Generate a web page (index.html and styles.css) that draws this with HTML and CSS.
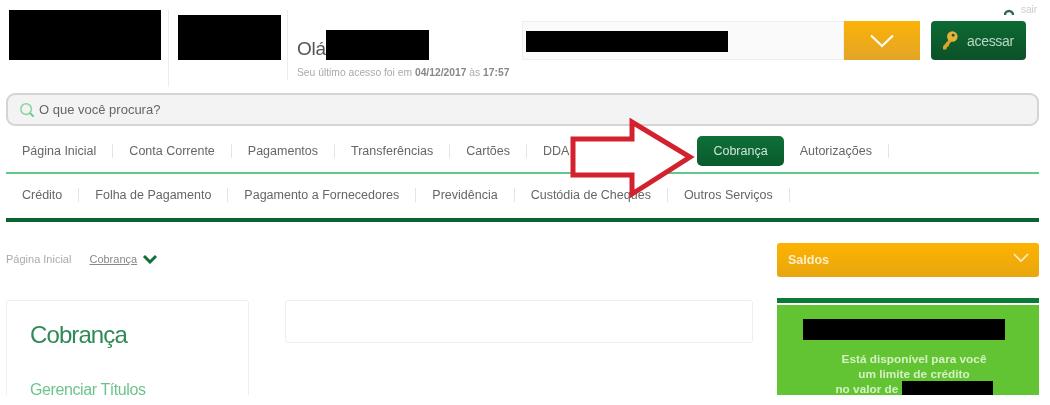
FILE: index.html
```html
<!DOCTYPE html>
<html lang="pt-BR">
<head>
<meta charset="UTF-8" />
<title>Cobrança</title>
<link rel="stylesheet" href="styles.css">
</head>
<body>
<div class="page">

  <header class="top">
    <div class="logos">
      <div class="redact logo-a"></div>
      <div class="sep sep-a"></div>
      <div class="redact logo-b"></div>
      <div class="sep sep-b"></div>
    </div>
    <div class="hello">
      <div class="hello-line"><span class="ola">Olá</span><div class="redact hello-name"></div></div>
      <p class="last">Seu último acesso foi em <b>04/12/2017</b> às <b>17:57</b></p>
    </div>
    <div class="login">
      <div class="exit">
        <svg width="10" height="6" viewBox="0 0 10 6"><path d="M1 6 A4 4 0 0 1 9 6" fill="none" stroke="#2f6b4a" stroke-width="2.4"/></svg>
        <span>sair</span>
      </div>
      <div class="login-row">
        <div class="account"><div class="redact account-name"></div></div>
        <div class="account-arrow">
          <svg width="24" height="14" viewBox="0 0 24 14"><path d="M1 1.5 L12 12 L23 1.5" fill="none" stroke="#fff" stroke-width="2"/></svg>
        </div>
        <a class="btn-access">
          <svg width="19" height="21" viewBox="0 0 22 26"><circle cx="14.5" cy="8" r="6.5" fill="#e8b23a"/><circle cx="15.5" cy="6.5" r="1.8" fill="#0f5f30"/><path d="M10 12 L3 20 L3 24 L7 24 L8 21 L10 20 L11 17 L14 14" fill="#d9a32d"/></svg>
          acessar
        </a>
      </div>
    </div>
  </header>

  <div class="search">
    <svg width="16" height="16" viewBox="0 0 18 18"><circle cx="8" cy="8" r="6" fill="none" stroke="#8fd3a4" stroke-width="1.8"/><path d="M12.5 12.5 L16.5 16.5" stroke="#6cc08a" stroke-width="2"/></svg>
    O que você procura?
  </div>

  <nav class="menu menu-main">
    <a>Página Inicial</a>
    <a>Conta Corrente</a>
    <a>Pagamentos</a>
    <a>Transferências</a>
    <a>Cartões</a>
    <a class="item-dda">DDA</a>
    <a class="active">Cobrança</a>
    <a>Autorizações</a>
  </nav>

  <nav class="menu menu-sub">
    <a>Crédito</a>
    <a>Folha de Pagamento</a>
    <a>Pagamento a Fornecedores</a>
    <a>Previdência</a>
    <a>Custódia de Cheques</a>
    <a>Outros Serviços</a>
  </nav>

  <div class="content">
    <main class="main-col">
      <div class="crumbs">
        <span>Página Inicial</span>
        <u>Cobrança</u>
        <svg width="16" height="10" viewBox="0 0 16 10"><path d="M2 2 L8 8 L14 2" fill="none" stroke="#12703a" stroke-width="3"/></svg>
      </div>
      <div class="cards">
        <section class="card card-menu">
          <h1>Cobrança</h1>
          <a>Gerenciar Títulos</a>
        </section>
        <section class="card card-empty"></section>
      </div>
    </main>

    <aside class="side">
      <div class="saldos">
        Saldos
        <svg width="16" height="10" viewBox="0 0 18 11"><path d="M1 1 L9 9 L17 1" fill="none" stroke="#fdeecb" stroke-width="1.8"/></svg>
      </div>
      <div class="credit">
        <div class="redact credit-name"></div>
        <p>Está disponível para você<br>um limite de crédito<br>no valor de <span class="redact credit-value"></span></p>
      </div>
    </aside>
  </div>

  <svg class="arrow" width="130" height="84" viewBox="0 0 130 84">
    <path d="M3 21 H62 V4 L120 39 L62 76 V57 H3 Z" fill="#fff" stroke="#d3212d" stroke-width="5"/>
  </svg>

</div>
</body>
</html>
```

FILE: styles.css
```css
html, body { margin: 0; padding: 0; background: #fff; }
body { font-family: "Liberation Sans", Arial, sans-serif; color: #666; }
p, h1 { margin: 0; }

.page { position: relative; width: 1050px; height: 395px; overflow: hidden; filter: blur(0.6px); }
.redact { background: #000; }

.top { display: flex; height: 93px; }
.logos { display: flex; align-items: flex-start; margin-left: 9px; }
.logo-a { width: 152px; height: 50px; margin-top: 10px; }
.logo-b { width: 103px; height: 45px; margin-top: 15px; }
.sep { width: 1px; background: #ececec; margin-top: 10px; }
.sep-a { height: 77px; margin: 10px 9px 0 7px; }
.sep-b { height: 70px; margin-left: 6px; }

.hello { margin-left: 9px; width: 224px; padding-top: 30px; }
.hello-line { display: flex; align-items: flex-end; height: 30px; }
.ola { font-size: 19px; color: #555; line-height: 22px; letter-spacing: -0.2px; }
.hello-name { width: 103px; height: 30px; }
.last { font-size: 10.3px; color: #aaa; margin-top: 7px; white-space: nowrap; }
.last b { color: #888; }

.login { width: 517px; margin-left: 1px; }
.exit { display: flex; justify-content: flex-end; align-items: flex-end; gap: 7px; height: 15px; padding-right: 2px; margin-bottom: 6px; font-size: 10px; color: #ccc; }
.login-row { display: flex; height: 39px; }
.account { width: 322px; background: #fafafa; border: 1px solid #eee; box-sizing: border-box; padding: 9px 0 0 3px; }
.account-name { width: 202px; height: 21px; }
.account-arrow { width: 76px; display: flex; align-items: center; justify-content: center; background: linear-gradient(#fbb207, #e3a528); }
.btn-access { display: flex; align-items: center; gap: 8px; width: 95px; margin-left: 11px; padding-left: 9px; box-sizing: border-box; border-radius: 4px; background: linear-gradient(#0d6a33, #0b5128); color: #b9d8c4; font-size: 14px; letter-spacing: -0.3px; }

.search { display: flex; align-items: center; gap: 4px; box-sizing: border-box; width: 1033px; height: 33px; margin-left: 6px; padding-left: 11px; background: #f3f3f3; border: 2px solid #d4d4d4; border-radius: 9px; font-size: 13px; color: #666; }

.menu { display: flex; align-items: center; width: 1033px; margin-left: 6px; box-sizing: border-box; font-size: 12.5px; }
.menu a { padding: 0 16px; border-right: 1px solid #e4e4e4; line-height: 14px; white-space: nowrap; }
.menu-main { height: 48px; padding-top: 3px; border-bottom: 2px solid #62c888; }
.menu-sub { height: 48px; padding-bottom: 2px; border-bottom: 4px solid #0b6430; }
.menu .item-dda { border-right: 0; margin-right: 112px; }
.menu .active { border-right: 0; line-height: 30px; padding: 0 16px; background: linear-gradient(#0e7038, #0a5a2c); color: #cfe6d6; border-radius: 5px; }

.content { display: flex; }
.main-col { width: 777px; }
.crumbs { display: flex; align-items: center; height: 78px; margin-left: 6px; padding-bottom: 4px; box-sizing: border-box; font-size: 11px; color: #aaa; }
.crumbs u { margin: 0 5px 0 18px; color: #888; }
.cards { display: flex; align-items: flex-start; gap: 36px; margin-left: 6px; }
.card { box-sizing: border-box; background: #fff; border: 1px solid #eee; border-radius: 3px; }
.card-menu { width: 243px; height: 100px; padding: 17px 0 0 23px; overflow: hidden; }
.card-menu h1 { font-size: 24px; font-weight: normal; color: #2f8a57; letter-spacing: -0.9px; line-height: 34px; }
.card-menu a { display: block; margin-top: 29px; font-size: 16px; color: #6cc48c; letter-spacing: -0.4px; }
.card-empty { width: 468px; height: 43px; }

.side { width: 262px; padding-top: 21px; }
.saldos { display: flex; justify-content: space-between; align-items: center; height: 34px; padding: 0 10px 0 11px; border-radius: 3px; background: linear-gradient(#fdb300, #e8a60f); color: #fdeecb; font-size: 12.5px; font-weight: bold; }
.saldos svg { margin-bottom: 4px; }
.credit { margin-top: 21px; height: 90px; border-top: 5px solid #0b7a34; box-shadow: inset 0 2px 0 #fff; background: #62c433; padding-top: 16px; text-align: center; color: #d6f0c4; font-size: 11.8px; font-weight: bold; line-height: 14.5px; }
.credit-name { width: 202px; height: 21px; margin: 0 0 12px 26px; }
.credit p { padding-left: 12px; }
.credit-value { display: inline-block; width: 91px; height: 14px; vertical-align: -2px; }

.arrow { position: absolute; left: 570px; top: 118px; }
```
